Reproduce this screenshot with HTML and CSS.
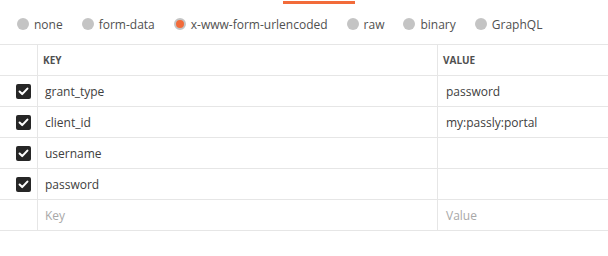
FILE: index.html
```html
<!DOCTYPE html>
<html>
<head>
<meta charset="utf-8">
<link rel="stylesheet" href="styles.css">
</head>
<body>
<div class="tabbar"><div class="tab-indicator"></div></div>
<div class="radios">
  <label class="radio"><span class="dot"></span><span class="rlabel">none</span></label>
  <label class="radio"><span class="dot"></span><span class="rlabel">form-data</span></label>
  <label class="radio"><span class="dot on"></span><span class="rlabel">x-www-form-urlencoded</span></label>
  <label class="radio"><span class="dot"></span><span class="rlabel">raw</span></label>
  <label class="radio"><span class="dot"></span><span class="rlabel">binary</span></label>
  <label class="radio"><span class="dot"></span><span class="rlabel">GraphQL</span></label>
</div>
<div class="table">
  <div class="row head">
    <div class="c check"></div>
    <div class="c key">KEY</div>
    <div class="c val">VALUE</div>
  </div>
  <div class="row">
    <div class="c check"><span class="cb"><svg viewBox="0 0 15 15" width="15" height="15"><path d="M3.6 7.6 L6.2 10.1 L11.4 4.6" fill="none" stroke="#fff" stroke-width="2.1" stroke-linecap="round" stroke-linejoin="round"/></svg></span></div>
    <div class="c key">grant_type</div>
    <div class="c val">password</div>
  </div>
  <div class="row">
    <div class="c check"><span class="cb"><svg viewBox="0 0 15 15" width="15" height="15"><path d="M3.6 7.6 L6.2 10.1 L11.4 4.6" fill="none" stroke="#fff" stroke-width="2.1" stroke-linecap="round" stroke-linejoin="round"/></svg></span></div>
    <div class="c key">client_id</div>
    <div class="c val">my:passly:portal</div>
  </div>
  <div class="row">
    <div class="c check"><span class="cb"><svg viewBox="0 0 15 15" width="15" height="15"><path d="M3.6 7.6 L6.2 10.1 L11.4 4.6" fill="none" stroke="#fff" stroke-width="2.1" stroke-linecap="round" stroke-linejoin="round"/></svg></span></div>
    <div class="c key">username</div>
    <div class="c val"></div>
  </div>
  <div class="row">
    <div class="c check"><span class="cb"><svg viewBox="0 0 15 15" width="15" height="15"><path d="M3.6 7.6 L6.2 10.1 L11.4 4.6" fill="none" stroke="#fff" stroke-width="2.1" stroke-linecap="round" stroke-linejoin="round"/></svg></span></div>
    <div class="c key">password</div>
    <div class="c val"></div>
  </div>
  <div class="row">
    <div class="c check"></div>
    <div class="c key ph">Key</div>
    <div class="c val ph">Value</div>
  </div>
</div>
</body>
</html>
```
FILE: styles.css
```css
html, body {
  margin: 0;
  padding: 0;
  background: #fff;
}
body {
  font-family: "Open Sans", "Liberation Sans", sans-serif;
  font-size: 12px;
  color: #404040;
}
.tabbar {
  height: 4px;
  padding-top: 1px;
  box-sizing: border-box;
  padding-left: 283px;
}
.tab-indicator {
  width: 72px;
  height: 3px;
  background: #f26b3a;
}
.radios {
  height: 40px;
  display: flex;
  align-items: center;
  padding-left: 17px;
}
.radio {
  display: flex;
  align-items: center;
  margin-right: 19px;
  color: #505050;
}
.dot {
  width: 12px;
  height: 12px;
  border-radius: 50%;
  background: #c4c4c4;
  margin-right: 5px;
  box-sizing: border-box;
}
.dot.on {
  background: #f26b3a;
  border: 2.5px solid #c4c4c4;
}
.table {
  border-top: 1px solid #e6e6e6;
}
.row {
  display: grid;
  grid-template-columns: 38px 400px 1fr;
  height: 31px;
  border-bottom: 1px solid #e6e6e6;
  box-sizing: border-box;
}
.c {
  display: flex;
  align-items: center;
  box-sizing: border-box;
}
.check, .key {
  border-right: 1px solid #e6e6e6;
}
.check {
  padding-left: 16px;
}
.key {
  padding-left: 7px;
}
.val {
  padding-left: 8px;
}
.head .c {
  font-size: 10px;
  font-weight: 700;
  color: #505050;
  padding-left: 5px;
}
.head .val {
  padding-left: 5px;
}
.cb {
  width: 15px;
  height: 15px;
  border-radius: 2px;
  background: #262626;
  display: block;
}
.cb svg {
  display: block;
}
.ph {
  color: #a8a8a8;
}
```
